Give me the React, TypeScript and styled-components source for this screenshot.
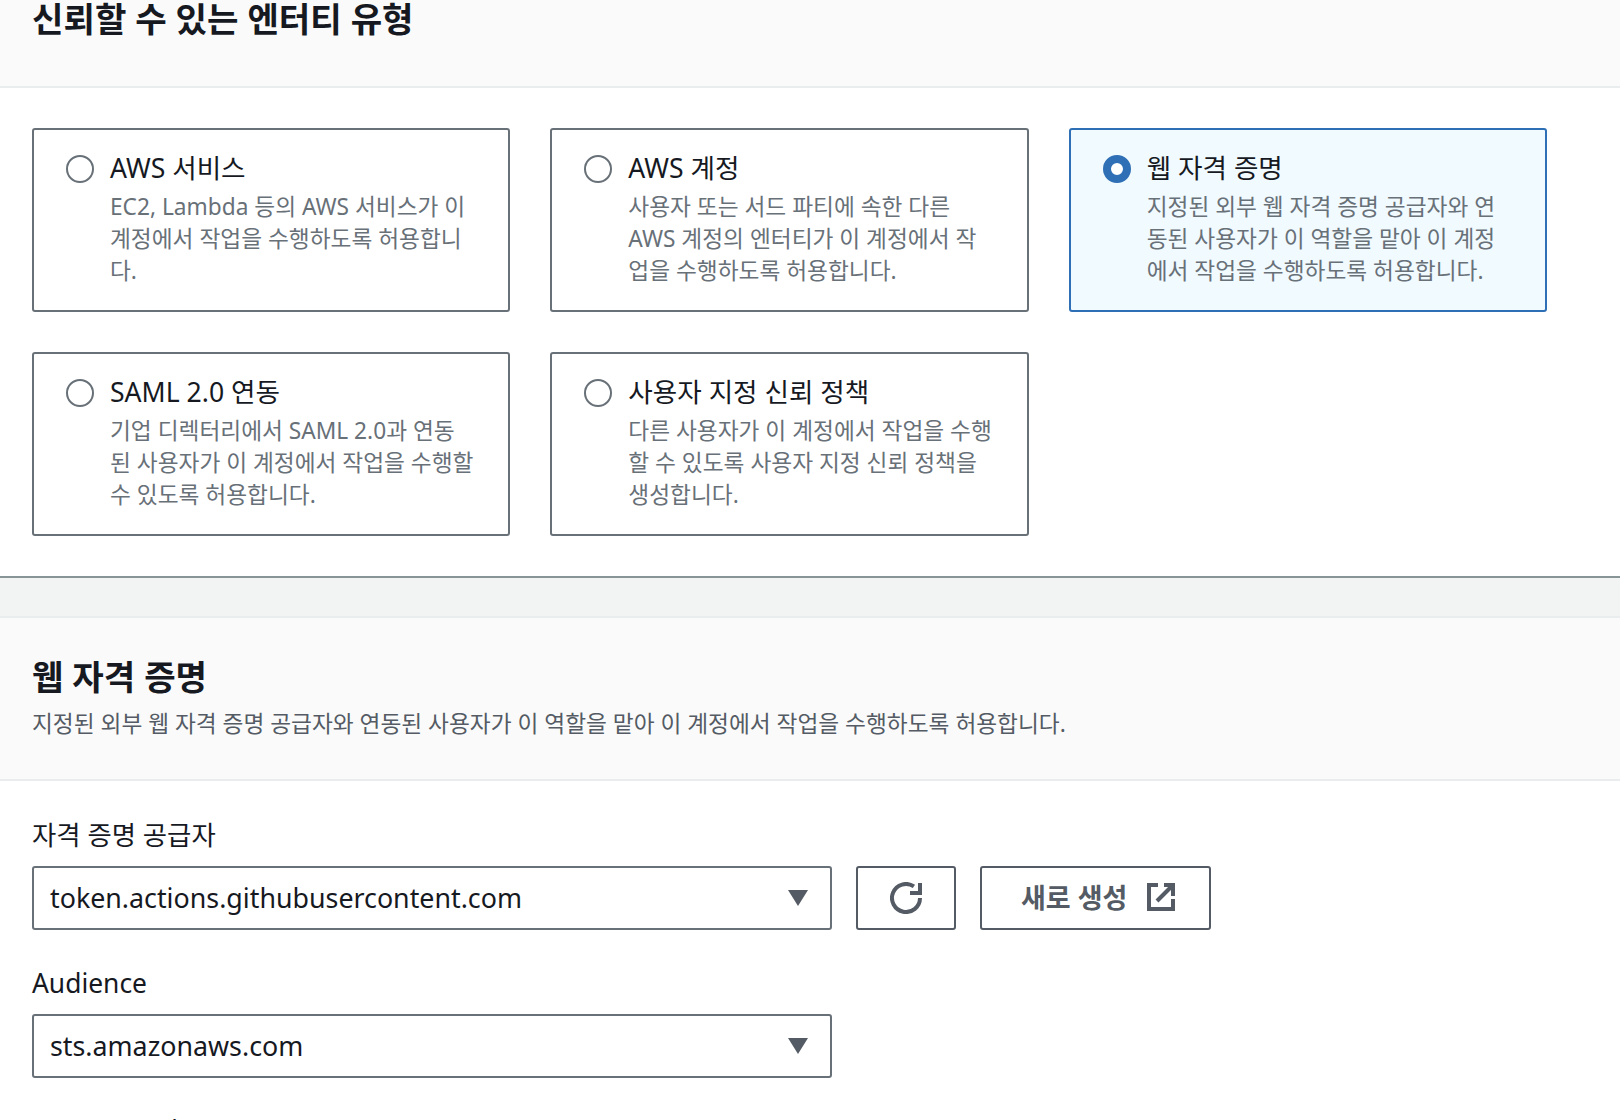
import React from "react";
import styled, { createGlobalStyle } from "styled-components";

const GlobalStyle = createGlobalStyle`
  html, body {
    margin: 0;
    padding: 0;
    background: #ffffff;
  }
  body {
    height: 1120px;
    overflow: hidden;
    font-family: "Noto Sans", "Noto Sans CJK KR", sans-serif;
    color: #16191f;
  }
`;

const SectionHeader = styled.div<{ $clipped?: boolean }>`
  background: #fafafa;
  border-bottom: 2px solid #eaeded;
  padding: ${(p) => (p.$clipped ? "0 32px 48px" : "40px 32px 39px")};
`;

const Heading = styled.h2`
  margin: 0;
  font-size: 34.2px;
  line-height: 38px;
  font-weight: 700;
  color: #16191f;
`;

const HeaderDescription = styled.p`
  margin: 12px 0 0;
  font-size: 22.7px;
  line-height: 32px;
  color: #545b64;
`;

const CardGrid = styled.div`
  display: grid;
  grid-template-columns: repeat(3, 1fr);
  gap: 40px;
  padding: 40px 73px 40px 32px;
  border-bottom: 2px solid #879596;
  box-shadow: 0 1px 1px rgba(0, 28, 36, 0.2);
`;

const Card = styled.div<{ $selected?: boolean }>`
  box-sizing: border-box;
  height: 184px;
  display: flex;
  gap: 16px;
  padding: 22px 32px 0;
  border: 2px solid ${(p) => (p.$selected ? "#2f6fb5" : "#687078")};
  border-radius: 3px;
  background: ${(p) => (p.$selected ? "#f1faff" : "#ffffff")};
`;

const Radio = styled.span<{ $selected?: boolean }>`
  box-sizing: border-box;
  flex: none;
  width: 28px;
  height: 28px;
  margin-top: 3px;
  border-radius: 50%;
  border: ${(p) => (p.$selected ? "8px solid #2f6fb5" : "2px solid #687078")};
  background: #ffffff;
`;

const CardTitle = styled.div`
  font-size: 26.6px;
  line-height: 32px;
  margin-bottom: 7px;
  color: #16191f;
`;

const CardLine = styled.div`
  font-size: 22.7px;
  line-height: 32px;
  color: #687078;
  white-space: nowrap;
`;

const Gutter = styled.div`
  height: 38px;
  background: #f2f3f3;
  border-bottom: 2px solid #eaeded;
`;

const Form = styled.div`
  padding: 38px 32px 0;
  display: flex;
  flex-direction: column;
  gap: 37px;
`;

const Field = styled.div`
  display: flex;
  flex-direction: column;
  gap: 15px;
`;

const Label = styled.label`
  font-size: 26.4px;
  line-height: 32px;
  color: #16191f;
`;

const NextLabel = styled(Label)`
  letter-spacing: 0.5px;
`;

const Row = styled.div`
  display: flex;
  gap: 24px;
`;

const Select = styled.div`
  box-sizing: border-box;
  width: 800px;
  height: 64px;
  display: flex;
  align-items: center;
  justify-content: space-between;
  padding: 0 22px 0 16px;
  border: 2px solid #687078;
  border-radius: 3px;
  font-size: 26.8px;
  color: #16191f;
`;

const SelectValue = styled.span`
  margin-bottom: 2px;
`;

const Button = styled.button<{ $wide?: boolean }>`
  box-sizing: border-box;
  width: ${(p) => (p.$wide ? "231px" : "100px")};
  height: 64px;
  display: flex;
  align-items: center;
  justify-content: ${(p) => (p.$wide ? "flex-start" : "center")};
  gap: 18px;
  padding: ${(p) => (p.$wide ? "0 0 0 39px" : "0")};
  border: 2px solid #545b64;
  border-radius: 3px;
  background: #ffffff;
  color: #545b64;
  font-family: inherit;
  font-size: 27px;
  font-weight: 700;
`;

const ButtonText = styled.span`
  margin-bottom: 4px;
`;

const ExternalSvg = styled.svg`
  margin-bottom: 2px;
`;

const CARDS = [
  {
    title: "AWS 서비스",
    lines: ["EC2, Lambda 등의 AWS 서비스가 이", "계정에서 작업을 수행하도록 허용합니", "다."],
  },
  {
    title: "AWS 계정",
    lines: ["사용자 또는 서드 파티에 속한 다른", "AWS 계정의 엔터티가 이 계정에서 작", "업을 수행하도록 허용합니다."],
  },
  {
    title: "웹 자격 증명",
    lines: ["지정된 외부 웹 자격 증명 공급자와 연", "동된 사용자가 이 역할을 맡아 이 계정", "에서 작업을 수행하도록 허용합니다."],
    selected: true,
  },
  {
    title: "SAML 2.0 연동",
    lines: ["기업 디렉터리에서 SAML 2.0과 연동", "된 사용자가 이 계정에서 작업을 수행할", "수 있도록 허용합니다."],
  },
  {
    title: "사용자 지정 신뢰 정책",
    lines: ["다른 사용자가 이 계정에서 작업을 수행", "할 수 있도록 사용자 지정 신뢰 정책을", "생성합니다."],
  },
];

function CaretIcon() {
  return (
    <svg width="20" height="16" viewBox="0 0 20 16">
      <path d="M0 0h20L10 16z" fill="#545b64" />
    </svg>
  );
}

function RefreshIcon() {
  return (
    <svg width="32" height="32" viewBox="0 0 16 16" fill="none" stroke="#545b64" strokeWidth="2">
      <path d="M15 8a7 7 0 1 1-3.04-5.77" />
      <path d="M15 .51v5h-5" />
    </svg>
  );
}

function ExternalIcon() {
  return (
    <ExternalSvg width="32" height="32" viewBox="0 0 16 16" fill="none" stroke="#545b64" strokeWidth="2">
      <path d="M6.5 2H2v12h12V9" />
      <path d="M9.5 2H14v5.5" />
      <path d="M14 2 6 10" />
    </ExternalSvg>
  );
}

export default function App() {
  return (
    <>
      <GlobalStyle />
      <SectionHeader $clipped>
        <Heading>신뢰할 수 있는 엔터티 유형</Heading>
      </SectionHeader>
      <CardGrid>
        {CARDS.map((card) => (
          <Card key={card.title} $selected={card.selected}>
            <Radio $selected={card.selected} />
            <div>
              <CardTitle>{card.title}</CardTitle>
              {card.lines.map((line) => (
                <CardLine key={line}>{line}</CardLine>
              ))}
            </div>
          </Card>
        ))}
      </CardGrid>
      <Gutter />
      <SectionHeader>
        <Heading>웹 자격 증명</Heading>
        <HeaderDescription>
          지정된 외부 웹 자격 증명 공급자와 연동된 사용자가 이 역할을 맡아 이 계정에서 작업을 수행하도록 허용합니다.
        </HeaderDescription>
      </SectionHeader>
      <Form>
        <Field>
          <Label>자격 증명 공급자</Label>
          <Row>
            <Select>
              <SelectValue>token.actions.githubusercontent.com</SelectValue>
              <CaretIcon />
            </Select>
            <Button aria-label="새로 고침">
              <RefreshIcon />
            </Button>
            <Button $wide>
              <ButtonText>새로 생성</ButtonText>
              <ExternalIcon />
            </Button>
          </Row>
        </Field>
        <Field>
          <Label>Audience</Label>
          <Select>
            <SelectValue>sts.amazonaws.com</SelectValue>
            <CaretIcon />
          </Select>
        </Field>
        <Field>
          <NextLabel>GitHub 조직</NextLabel>
        </Field>
      </Form>
    </>
  );
}
